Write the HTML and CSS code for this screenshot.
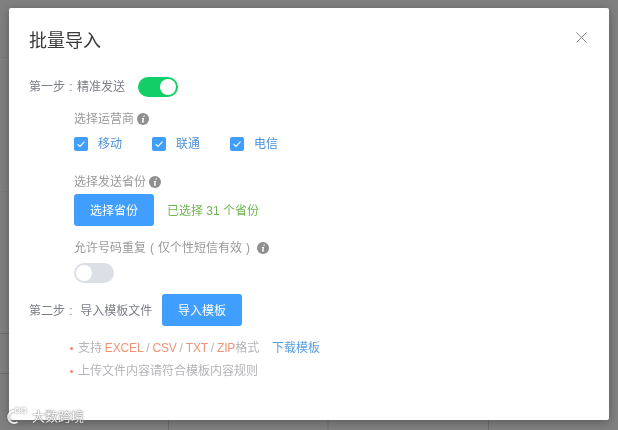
FILE: index.html
```html
<!DOCTYPE html>
<html lang="zh-CN">
<head>
  <meta charset="UTF-8" />
  <meta name="viewport" content="width=device-width, initial-scale=1.0"/>
  <title>批量导入</title>
  <link rel="stylesheet" href="styles.css">
</head>
<body>
  <!-- page behind the mask -->
  <div class="page">
    <div class="page-row row-a"></div>
    <div class="page-row row-b"></div>
    <div class="page-row row-c"></div>
    <div class="page-row row-e"></div>
    <div class="page-row row-d">
      <div class="page-cell cell-a"></div>
      <div class="page-cell cell-b"></div>
      <div class="page-cell"></div>
    </div>
  </div>

  <div class="mask">
    <div class="modal">
      <div class="modal-header">
        <h2>批量导入</h2>
        <svg class="close" width="11" height="11" viewBox="0 0 12 12">
          <path d="M.5.5l11 11M11.500.5l-11 11" stroke="#7f8790" stroke-width="1" fill="none"/>
        </svg>
      </div>

      <div class="step step-one">
        <span class="step-label">第一步<span class="colon">:</span>精准发送</span>
        <span class="switch on"><i></i></span>
      </div>

      <div class="sub">
        <div class="sub-title">选择运营商
          <svg class="info" width="12" height="12" viewBox="0 0 12 12"><circle cx="6" cy="6" r="6" fill="#8f8f8f"/><path d="M6.600 2.400h1.300l-.3 1.300H6.300zM5 5h2.200L6.400 8.600h.8l-.2.9H4.800L5.600 5.900H4.800z" fill="#fff"/></svg>
        </div>
        <div class="carriers">
          <label class="check"><span class="box"><svg width="14" height="14" viewBox="0 0 14 14"><path d="M3.500 7.200l2.500 2.300 4.500-4.800" stroke="#fff" stroke-width="1.100" fill="none"/></svg></span><span class="check-text">移动</span></label>
          <label class="check"><span class="box"><svg width="14" height="14" viewBox="0 0 14 14"><path d="M3.500 7.200l2.500 2.300 4.500-4.800" stroke="#fff" stroke-width="1.100" fill="none"/></svg></span><span class="check-text">联通</span></label>
          <label class="check"><span class="box"><svg width="14" height="14" viewBox="0 0 14 14"><path d="M3.500 7.200l2.500 2.300 4.500-4.800" stroke="#fff" stroke-width="1.100" fill="none"/></svg></span><span class="check-text">电信</span></label>
        </div>
      </div>

      <div class="sub sub-province">
        <div class="sub-title">选择发送省份
          <svg class="info" width="12" height="12" viewBox="0 0 12 12"><circle cx="6" cy="6" r="6" fill="#8f8f8f"/><path d="M6.600 2.400h1.300l-.3 1.300H6.300zM5 5h2.200L6.400 8.600h.8l-.2.9H4.800L5.600 5.900H4.800z" fill="#fff"/></svg>
        </div>
        <div class="province-row">
          <button class="btn">选择省份</button>
          <span class="selected">已选择 31 个省份</span>
        </div>
      </div>

      <div class="sub sub-repeat">
        <div class="sub-title"><span>允许号码重复<span class="paren">(</span>仅个性短信有效<span class="paren">)</span></span>
          <svg class="info" width="12" height="12" viewBox="0 0 12 12"><circle cx="6" cy="6" r="6" fill="#8f8f8f"/><path d="M6.600 2.400h1.300l-.3 1.300H6.300zM5 5h2.200L6.400 8.600h.8l-.2.9H4.800L5.600 5.900H4.800z" fill="#fff"/></svg>
        </div>
        <span class="switch"><i></i></span>
      </div>

      <div class="step step-two">
        <span class="step-label">第二步<span class="colon">:</span> 导入模板文件</span>
        <button class="btn">导入模板</button>
      </div>

      <ul class="tips">
        <li>支持 <em>EXCEL</em> / <em>CSV</em> / <em>TXT</em> / <em>ZIP</em>格式 <a href="#">下载模板</a></li>
        <li>上传文件内容请符合模板内容规则</li>
      </ul>
    </div>
  </div>

  <!-- watermark sits on top of everything -->
  <div class="watermark">
    <svg width="22" height="17" viewBox="0 0 22 17">
      <path d="M7.500 4a6 6 0 1 0 3 11" stroke="#fff" stroke-width="2" fill="none"/>
      <circle cx="10.500" cy="3.500" r="2.500" stroke="#fff" fill="none"/>
      <circle cx="16.500" cy="3.500" r="2.500" stroke="#fff" fill="none"/>
    </svg>
    <span>大数跨境</span>
  </div>
</body>
</html>
```
FILE: styles.css
```css
* {
  margin: 0;
  padding: 0;
  box-sizing: border-box;
}

html, body {
  height: 100%;
  overflow: hidden;
}

body {
  font-family: "Liberation Sans", "Noto Sans CJK SC", sans-serif;
  background: #808080;
}

/* page behind the mask, only its hairlines show */
.page {
  height: 100%;
  display: flex;
  flex-direction: column;
}

.page-row {
  width: 20px;
  border-bottom: 1px solid #7a7a7a;
}

.row-a { height: 58px; }
.row-b { height: 134px; }
.row-c { height: 142px; border-bottom-color: #6c6c6c; }
.row-e { height: 40px; border-bottom-color: #6c6c6c; }

.page-row.row-d {
  width: auto;
  flex: 1;
  display: flex;
  border-bottom: 0;
}

.row-d .page-cell {
  width: 160px;
  border-right: 1px solid #6c6c6c;
}

.row-d .cell-a { width: 169px; }
.row-d .cell-b { width: 160px; border-right: 2px solid #777; }

.mask {
  position: fixed;
  top: 0;
  left: 0;
  right: 0;
  bottom: 0;
  padding: 8px 9px 10px;
}

.modal {
  width: 600px;
  height: 412px;
  background: white;
  border-radius: 2px;
  padding: 0 20px;
  box-shadow: 0 2px 10px rgba(0, 0, 0, 0.3);
}

.modal-header {
  height: 62px;
  display: flex;
  align-items: center;
  justify-content: space-between;
}

.modal-header h2 {
  font-size: 18px;
  font-weight: 400;
  color: #3a3a3a;
  line-height: 62px;
  padding-top: 4px;
}

.close {
  margin: -4px 2.5px 0 0;
}

.step {
  display: flex;
  align-items: center;
  font-size: 12px;
  color: #7b7f87;
}

.colon {
  display: inline-block;
  width: 12px;
  text-align: center;
}

.step-one {
  height: 22px;
  margin-top: 6px;
}

.step-one .step-label {
  width: 109px;
  padding-bottom: 4px;
}

.step-two {
  height: 32px;
  margin-top: 11px;
}

.step-two .step-label {
  width: 133px;
  padding-bottom: 2px;
}

.switch {
  width: 40px;
  height: 20px;
  border-radius: 10px;
  background: #dcdfe6;
  padding: 2px;
  display: block;
}

.switch i {
  display: block;
  width: 16px;
  height: 16px;
  border-radius: 50%;
  background: white;
}

.switch.on {
  background: #13ce66;
  padding-left: 22px;
}

.sub {
  padding-left: 45px;
}

.sub-title {
  display: flex;
  align-items: center;
  gap: 3px;
  font-size: 12px;
  color: #9a9a9a;
  height: 18px;
  padding-bottom: 3px;
}

.info {
  margin-top: 3px;
}

.paren {
  margin: 0 4px;
}

.step-one + .sub {
  margin-top: 12px;
}

.carriers {
  display: flex;
  margin-top: 7px;
  height: 18px;
}

.check {
  width: 78px;
  display: flex;
  align-items: center;
  font-size: 12px;
  color: #4a90d9;
}

.check-text {
  padding-bottom: 3px;
}

.box {
  width: 14px;
  height: 14px;
  border-radius: 2px;
  background: #409eff;
  margin-right: 10px;
  display: block;
}

.box svg {
  display: block;
}

.sub-province {
  margin-top: 20px;
}

.province-row {
  display: flex;
  align-items: center;
  margin-top: 3px;
}

.btn {
  width: 80px;
  height: 32px;
  border: none;
  border-radius: 3px;
  background: #409eff;
  color: white;
  font-family: inherit;
  font-size: 12px;
  padding-bottom: 2px;
}

.selected {
  margin-left: 13px;
  padding-bottom: 2px;
  font-size: 12px;
  color: #6fb552;
}

.sub-repeat {
  margin-top: 13px;
}

.sub-repeat .switch {
  margin-top: 6px;
}

.tips {
  list-style: none;
  padding-left: 41px;
  margin-top: 11px;
  font-size: 12px;
  color: #b4b4b8;
}

.tips li {
  height: 23px;
  line-height: 23px;
  position: relative;
  white-space: nowrap;
  padding-left: 8px;
  word-spacing: -0.5px;
}

.tips li::before {
  content: '';
  position: absolute;
  left: 0;
  top: 10px;
  width: 3px;
  height: 3px;
  border-radius: 50%;
  background: #f0866a;
}

.tips em {
  font-style: normal;
  color: #ee9478;
  letter-spacing: -0.15px;
}

.tips a {
  color: #5a9fe0;
  text-decoration: none;
  margin-left: 10px;
}

.watermark {
  position: absolute;
  left: 7px;
  top: 406px;
  display: flex;
  align-items: center;
  gap: 3px;
  color: white;
  font-size: 13px;
  opacity: 0.8;
  text-shadow: 0 0 1px #555, 0 0 2px #555;
}

.watermark svg {
  filter: drop-shadow(0 0 1px #555);
}
```
